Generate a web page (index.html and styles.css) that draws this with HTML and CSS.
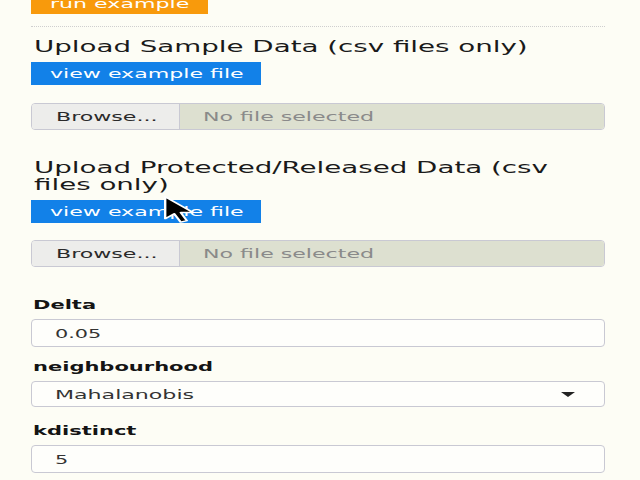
FILE: index.html
```html
<!DOCTYPE html>
<html>
<head>
<meta charset="utf-8">
<link rel="stylesheet" href="styles.css">
</head>
<body>
<div class="panel">
  <button class="btn btn-run"><span class="sx">run example</span></button>
  <hr class="rule">

  <section class="upload">
    <h3 class="upload-title"><span class="sx sx-title">Upload Sample Data (csv files only)</span></h3>
    <a class="btn btn-view"><span class="sx">view example file</span></a>
    <div class="file-input">
      <span class="file-browse"><span class="sx">Browse...</span></span>
      <span class="file-name"><span class="sx">No file selected</span></span>
    </div>
  </section>

  <section class="upload upload-second">
    <h3 class="upload-title"><span class="sx sx-title">Upload Protected/Released Data (csv files only)</span></h3>
    <a class="btn btn-view"><span class="sx">view example file</span></a>
    <div class="file-input">
      <span class="file-browse"><span class="sx">Browse...</span></span>
      <span class="file-name"><span class="sx">No file selected</span></span>
    </div>
  </section>

  <div class="field field-first">
    <label class="field-label"><span class="sx sx-label">Delta</span></label>
    <div class="text-input"><span class="sx sx-value">0.05</span></div>
  </div>

  <div class="field field-select">
    <label class="field-label"><span class="sx sx-label">neighbourhood</span></label>
    <div class="select-input"><span class="sx">Mahalanobis</span><span class="caret"></span></div>
  </div>

  <div class="field field-last">
    <label class="field-label"><span class="sx sx-label">kdistinct</span></label>
    <div class="text-input"><span class="sx sx-value">5</span></div>
  </div>
</div>

<svg class="cursor" viewBox="0 0 13 21" preserveAspectRatio="none" width="31" height="28">
  <path d="M0.5 0.5 L0.5 17 L4.3 13.3 L7 19.6 L9.6 18.5 L7 12.4 L12.2 12.4 Z" fill="#000" stroke="#fff" stroke-width="1" stroke-linejoin="round"/>
</svg>
</body>
</html>
```

FILE: styles.css
```css
html, body {
  margin: 0;
  padding: 0;
  background: #fdfdf5;
  overflow: hidden;
}

body {
  font-family: "DejaVu Sans", sans-serif;
  font-size: 13px;
  color: #222;
}

.panel {
  margin: -9px 0 0 31px;
  width: 574px;
}

.sx {
  display: inline-block;
  white-space: nowrap;
  transform: scaleX(1.7);
  transform-origin: 0 50%;
}

.sx-title {
  display: block;
  width: 332px;
  white-space: normal;
  transform: scaleX(1.73);
  transform-origin: 0 0;
}

.sx-label {
  transform: scaleX(1.75);
}

.sx-value {
  transform: scaleX(1.6);
}

.btn {
  display: block;
  box-sizing: border-box;
  height: 23px;
  line-height: 23px;
  padding: 0 0 0 19px;
  border: 0;
  border-radius: 0;
  font-family: "DejaVu Sans", sans-serif;
  font-size: 13px;
  color: #fff;
  text-align: left;
  text-decoration: none;
  overflow: hidden;
}

.btn-run {
  width: 177px;
  line-height: 26px;
  background: #f89a0c;
}

.btn-view {
  width: 230px;
  background: #1281e8;
}

.rule {
  margin: 12px 0 0;
  height: 0;
  border: 0;
  border-top: 1px dotted #cfcfcf;
}

.upload-title {
  margin: 11px 0 7px 3px;
  font-size: 16px;
  font-weight: normal;
  line-height: 17px;
  color: #1a1a1a;
}

.upload-second .upload-title {
  margin-top: 29px;
}

.file-input {
  display: flex;
  box-sizing: border-box;
  height: 27px;
  margin-top: 18px;
  border: 1px solid #c9c9d3;
  border-radius: 4px;
  overflow: hidden;
  line-height: 25px;
}

.upload-second .file-input {
  margin-top: 17px;
}

.file-browse {
  box-sizing: border-box;
  width: 148px;
  padding-left: 24px;
  background: #ededeb;
  border-right: 1px solid #c9c9d3;
  color: #2a2a2a;
}

.file-name {
  flex: 1;
  padding-left: 23px;
  background: #dde0d0;
  color: #8a8a8a;
}

.field-first {
  margin-top: 31px;
}

.field-select {
  margin-top: 13px;
}

.field-last {
  margin-top: 17px;
}

.field-label {
  display: block;
  margin: 0 0 6px 2px;
  font-size: 12px;
  font-weight: bold;
  line-height: 15px;
  color: #141414;
}

.text-input,
.select-input {
  display: flex;
  align-items: center;
  box-sizing: border-box;
  border: 1px solid #c9c9d3;
  border-radius: 4px;
  background: #fefefb;
  padding-left: 23px;
  color: #333;
}

.text-input {
  height: 28px;
}

.select-input {
  height: 26px;
}

.caret {
  margin-left: auto;
  margin-right: 29px;
  width: 0;
  height: 0;
  border-left: 7px solid transparent;
  border-right: 7px solid transparent;
  border-top: 5px solid #222;
}

.cursor {
  position: absolute;
  left: 164px;
  top: 196px;
}
```
